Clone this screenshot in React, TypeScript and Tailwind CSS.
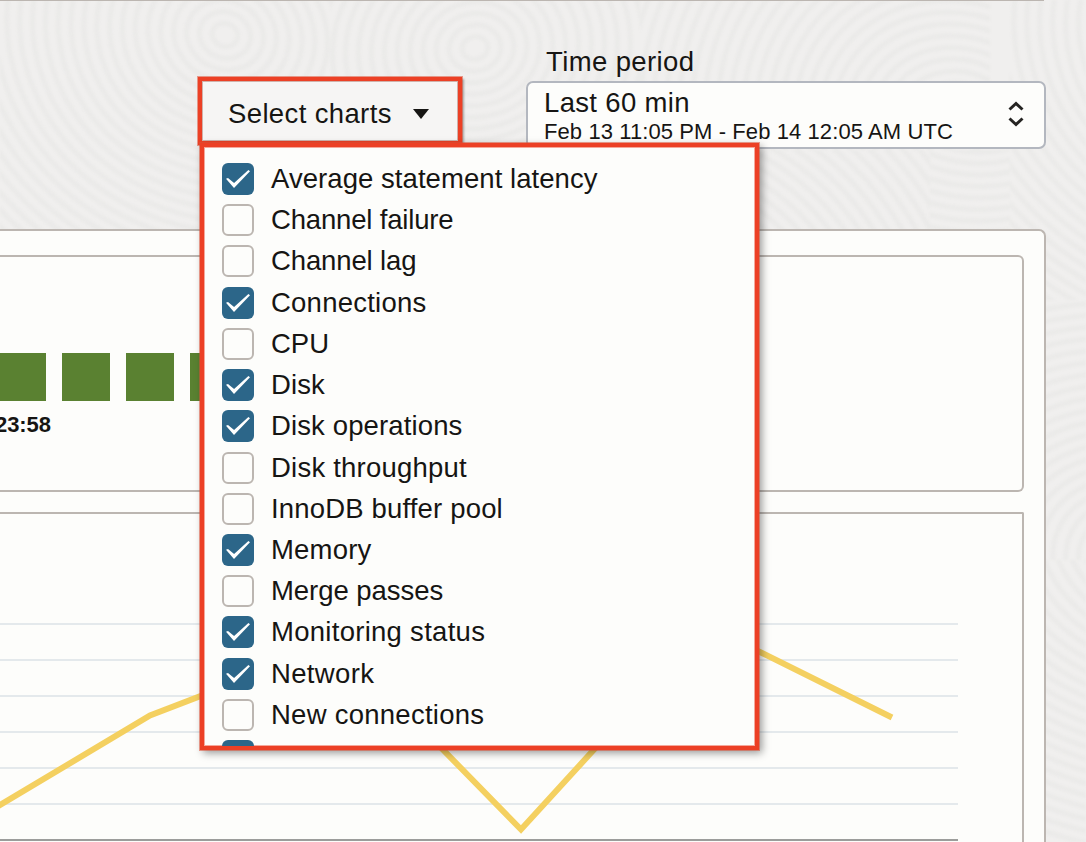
import React from 'react';

type ChartOption = { label: string; checked: boolean; tracking?: string };

const options: ChartOption[] = [
  { label: 'Average statement latency', checked: true, tracking: 'tracking-[0.06px]' },
  { label: 'Channel failure', checked: false, tracking: 'tracking-[-0.17px]' },
  { label: 'Channel lag', checked: false, tracking: 'tracking-[-0.12px]' },
  { label: 'Connections', checked: true, tracking: 'tracking-[0.23px]' },
  { label: 'CPU', checked: false },
  { label: 'Disk', checked: true, tracking: 'tracking-[0.1px]' },
  { label: 'Disk operations', checked: true, tracking: 'tracking-[0.13px]' },
  { label: 'Disk throughput', checked: false, tracking: 'tracking-[0.22px]' },
  { label: 'InnoDB buffer pool', checked: false, tracking: 'tracking-[0.17px]' },
  { label: 'Memory', checked: true, tracking: 'tracking-[0.2px]' },
  { label: 'Merge passes', checked: false, tracking: 'tracking-[-0.05px]' },
  { label: 'Monitoring status', checked: true, tracking: 'tracking-[0.28px]' },
  { label: 'Network', checked: true, tracking: 'tracking-[0.35px]' },
  { label: 'New connections', checked: false, tracking: 'tracking-[0.26px]' },
  { label: '', checked: true },
];

const ringGroups = [
  { cx: 225, cy: 35, clip: 'M-10 0H330V260H-10Z', count: 26, rotate: 20 },
  { cx: 475, cy: 48, clip: 'M330 0H640V260H330Z', count: 20, rotate: -10 },
  { cx: 960, cy: 130, clip: 'M640 0H990V150H640Z', count: 30, rotate: 25 },
  { cx: 640, cy: 340, clip: 'M640 150H930V260H640Z', count: 28, rotate: 15 },
  { cx: 980, cy: 60, clip: 'M930 150H1010V260H930Z', count: 18, rotate: 0 },
  { cx: 1260, cy: 30, clip: 'M1010 0H1086V300H1010Z', count: 38, rotate: 10 },
  { cx: 1130, cy: 560, clip: 'M1010 300H1086V560H1010Z', count: 30, rotate: 20 },
  { cx: 1180, cy: 520, clip: 'M1010 560H1086V842H1010Z', count: 34, rotate: 0 },
];

function Texture() {
  return (
    <svg className="absolute inset-0 blur-[1.2px]" width="1086" height="842" aria-hidden="true">
      {ringGroups.map((g, i) => (
        <g key={i} clipPath={`url(#ring-clip-${i})`}>
          <clipPath id={`ring-clip-${i}`}>
            <path d={g.clip} />
          </clipPath>
          <g transform={`rotate(${g.rotate} ${g.cx} ${g.cy})`}>
            {Array.from({ length: g.count }, (_, n) => (
              <ellipse
                key={n}
                cx={g.cx}
                cy={g.cy}
                rx={(n + 1) * 13}
                ry={(n + 1) * 11.5}
                fill="none"
                stroke="#e8e8e6"
                strokeWidth="5"
                strokeOpacity="0.6"
              />
            ))}
          </g>
        </g>
      ))}
    </svg>
  );
}

function Checkbox({ checked }: { checked: boolean }) {
  if (!checked) {
    return <span className="size-8 shrink-0 rounded-[6px] border-2 border-[#bcb6b1] bg-[#fdfdfb]" />;
  }
  return (
    <span className="size-8 shrink-0 rounded-[6px] bg-[#2c6689]">
      <svg width="32" height="32" viewBox="0 0 32 32">
        <path d="M4 15.8 6 15 12.1 20 26.4 6.9 28 8.2 12 25Z" fill="#fff" />
      </svg>
    </span>
  );
}

function ChartMenu() {
  return (
    <div className="absolute top-[66px] left-[2px] h-[607px] w-[559px] overflow-hidden border-4 border-[#ec4025] bg-[#fdfdfb] pt-[16px] pl-[18px] shadow-[0_0_0_1px_rgba(222,80,55,0.55),inset_0_0_0_1px_rgba(236,64,37,0.45),3px_3px_8px_rgba(0,0,0,0.4)]">
      {options.map((o, i) => (
        <div key={i} className="flex h-[41.23px] items-start gap-[17px]">
          <Checkbox checked={o.checked} />
          {o.label && (
            <span className={`text-[27.5px] leading-8 whitespace-nowrap ${o.tracking ?? ''}`}>{o.label}</span>
          )}
        </div>
      ))}
    </div>
  );
}

function UsageChart() {
  return (
    <svg className="block" width="1022" height="328" viewBox="0 514 1022 328">
      {[624, 660, 696, 732, 768, 804].map((y) => (
        <path key={y} d={`M0 ${y}H958`} stroke="#e4e9ec" strokeWidth="2" />
      ))}
      <path d="M0 840H958" stroke="#9c9d9b" strokeWidth="2" />
      <path
        d="M-10 811 150 715.5 273.7 668 397.3 703 521 829.5 644.7 694 700 624 762 653 892 717.5"
        fill="none"
        stroke="#f4d060"
        strokeWidth="6"
      />
    </svg>
  );
}

export default function App() {
  return (
    <div className="relative flex h-[842px] w-[1086px] flex-col overflow-hidden bg-[#f0efee] font-['Liberation_Sans',Arial,sans-serif] text-[27.5px] text-[#161513]">
      <Texture />
      <div className="relative h-px w-[1044px] shrink-0 bg-[#bcb6b1]" />

      <header className="relative z-10 flex h-[228px] shrink-0 items-start pl-[198px]">
        <div className="relative mt-[76px] mr-[64px]">
          <button className="flex h-[68px] w-[264px] items-center border-4 border-[#ec4025] bg-[#f6f5f4] pt-[5px] pl-[26px] shadow-[0_0_0_1px_rgba(222,80,55,0.55),inset_0_0_0_1px_rgba(170,110,95,0.5),2px_2px_2px_rgba(0,0,0,0.3)]">
            <span className="leading-8 tracking-[0.37px] whitespace-nowrap">Select charts</span>
            <svg className="ml-[21px]" width="16" height="10" viewBox="0 0 16 10">
              <path d="M0 0H16L8 10Z" fill="#161513" />
            </svg>
          </button>
          <ChartMenu />
        </div>
        <div className="w-[520px] pt-[45px]">
          <div className="h-[35px] pl-[20px] leading-8 tracking-[0.38px]">Time period</div>
          <div className="flex h-[68px] items-center justify-between rounded-[7px] border-2 border-[#b3b7bf] bg-[#fdfdfb] pr-[20px] pl-[16px]">
            <div className="pt-[1px]">
              <div className="leading-8 tracking-[0.34px]">Last 60 min</div>
              <div className="text-[22px] leading-[26px] tracking-[0.09px] whitespace-nowrap">
                Feb 13 11:05 PM - Feb 14 12:05 AM UTC
              </div>
            </div>
            <svg className="mb-[3px]" width="16" height="28" viewBox="0 0 16 28" fill="none" stroke="#252422" strokeWidth="3">
              <path d="M1.5 9.5 8 3.5 14.5 9.5M1.5 18.5 8 24.5 14.5 18.5" />
            </svg>
          </div>
        </div>
      </header>

      <main className="relative h-[613px] w-[1046px] shrink-0 rounded-tr-[7px] border-t-2 border-r-2 border-[#bcb6b1] bg-[#fdfdfb] pt-[24px]">
        <section className="h-[237px] w-[1024px] rounded-r-[6px] border-y-2 border-r-2 border-[#bcb6b1] pt-[96px]">
          <div className="-ml-[2px] flex gap-4">
            <div className="size-12 bg-[#5a8131]" />
            <div className="size-12 bg-[#5a8131]" />
            <div className="size-12 bg-[#5a8131]" />
            <div className="size-12 bg-[#5a8131]" />
          </div>
          <div className="-ml-[5px] pt-[11px] text-[22px] leading-[26px] font-bold tracking-[-0.1px]">23:58</div>
        </section>
        <section className="mt-[20px] h-[330px] w-[1024px] rounded-tr-[2px] border-t-2 border-r-2 border-[#bcb6b1]">
          <UsageChart />
        </section>
      </main>
    </div>
  );
}
